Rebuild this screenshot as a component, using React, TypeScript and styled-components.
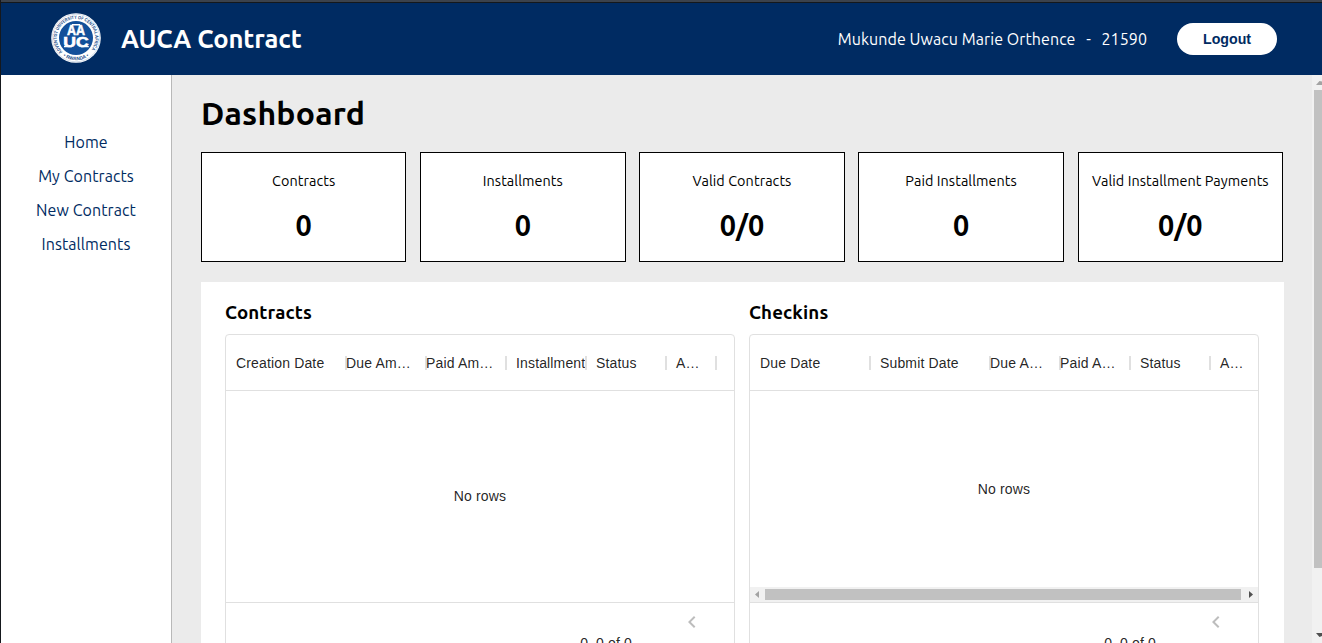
import React from "react";
import styled, { createGlobalStyle } from "styled-components";

const NAVY = "#002b62";
const LINE = "#e0e0e0";

const GlobalStyle = createGlobalStyle`
  * { box-sizing: border-box; }
  html, body { margin: 0; height: 100%; overflow: hidden; }
  body { font-family: Ubuntu, "Noto Sans", sans-serif; color: #000; background: #fff; }
  #root { height: 100%; }
`;

const Frame = styled.div`
  height: 643px;
  display: flex;
  flex-direction: column;
  overflow: hidden;
  border-left: 1px solid #15181d;
`;

const WindowEdge = styled.div`
  flex: none;
  height: 3px;
  background: #3b424c;
  border-bottom: 1px solid #14181c;
`;

const Header = styled.header`
  flex: none;
  height: 72px;
  padding: 0 45px 0 50px;
  display: flex;
  align-items: center;
  background: ${NAVY};
  color: #fff;
`;

const LogoSvg = styled.svg`
  flex: none;
  width: 50px;
  height: 50px;
  margin-top: -3px;
`;

const Label = styled.span<{ $size: number; $bold?: boolean }>`
  font-size: ${(p) => p.$size}px;
  font-weight: ${(p) => (p.$bold ? 700 : 400)};
  letter-spacing: ${(p) => (p.$bold ? 0 : 0.075)}px;
  white-space: nowrap;
`;

const Brand = styled(Label)`
  margin: -2px 0 0 20px;
  letter-spacing: -0.1px;
`;

const Account = styled.div`
  margin-left: auto;
  display: flex;
  align-items: center;
`;

const Dash = styled(Label)`
  width: 26px;
  text-align: center;
`;

const LogoutButton = styled.button`
  width: 100px;
  height: 32px;
  margin-left: 30px;
  border: 0;
  border-radius: 16px;
  background: #fff;
  color: ${NAVY};
  font: 700 14.2px "Liberation Sans", Arial, sans-serif;
`;

const Body = styled.div`
  flex: 1;
  min-height: 0;
  display: flex;
`;

const Sidebar = styled.nav`
  flex: none;
  width: 171px;
  padding-top: 50px;
  display: flex;
  flex-direction: column;
  align-items: center;
  background: #fff;
  border-right: 1px solid #b8b8b8;
`;

const NavLink = styled(Label)`
  height: 34px;
  line-height: 34px;
  color: ${NAVY};
`;

const Main = styled.main`
  flex: 1;
  min-width: 0;
  padding: 16px 28px 0 29px;
  background: #ebebeb;
  overflow: hidden;
`;

const Title = styled.h1`
  margin: 0;
  height: 44px;
  line-height: 44px;
  font-size: 32px;
  font-weight: 700;
  letter-spacing: 0.2px;
`;

const Cards = styled.section`
  margin-top: 17px;
  width: 1082px;
  display: grid;
  grid-template-columns: repeat(5, 1fr);
  column-gap: 13.8px;
`;

const Card = styled.article`
  height: 110px;
  padding-top: 18px;
  display: flex;
  flex-direction: column;
  align-items: center;
  background: #fff;
  border: 1px solid #000;
`;

const CardName = styled(Label)`
  height: 20px;
  line-height: 20px;
`;

const CardValue = styled(Label)`
  margin-top: 14px;
  height: 40px;
  line-height: 40px;
`;

const Panel = styled.section`
  width: 1083px;
  height: 480px;
  margin-top: 20px;
  padding: 18px 24px;
  display: flex;
  gap: 14px;
  background: #fff;
`;

const TableBlock = styled.div`
  flex: none;
  width: 510px;
`;

const TableTitle = styled.h2`
  margin: 0 0 9px;
  height: 25px;
  line-height: 25px;
  font-size: 18.72px;
  font-weight: 700;
  letter-spacing: 0.13px;
`;

const Grid = styled.div`
  height: 400px;
  display: flex;
  flex-direction: column;
  border: 1px solid ${LINE};
  border-radius: 4px;
  overflow: hidden;
  font: 14px "Liberation Sans", Arial, sans-serif;
  letter-spacing: 0.15px;
  color: rgba(0, 0, 0, 0.87);
`;

const GridHead = styled.div`
  flex: none;
  height: 56px;
  display: flex;
  align-items: center;
  border-bottom: 1px solid ${LINE};
`;

const HeadCell = styled.div<{ $width: number; $flush?: boolean }>`
  flex: none;
  position: relative;
  width: ${(p) => p.$width}px;
  height: 20px;
  line-height: 20px;
  padding-left: ${(p) => (p.$flush ? 0 : 10)}px;
  white-space: nowrap;
`;

const Separator = styled.i`
  position: absolute;
  right: -1px;
  top: 3px;
  width: 2px;
  height: 14px;
  background: ${LINE};
`;

const GridBody = styled.div`
  flex: none;
  height: 212px;
  display: flex;
  flex-direction: column;
  border-bottom: 1px solid ${LINE};
`;

const Empty = styled.div`
  flex: 1;
  display: flex;
  align-items: center;
  justify-content: center;
  padding-bottom: 1px;
`;

const HScroll = styled.div`
  flex: none;
  height: 15px;
  display: flex;
  align-items: center;
  padding-left: 5px;
  background: #f1f1f1;
`;

const HThumb = styled.div`
  width: 476px;
  height: 11px;
  margin: 0 8px 0 6px;
  background: #c1c1c1;
`;

const GridFoot = styled.div`
  flex: 1;
  display: flex;
  justify-content: flex-end;
  align-items: flex-start;
`;

const RowCount = styled.span`
  margin-top: 30px;
  line-height: 20px;
`;

const PrevIcon = styled.svg`
  width: 24px;
  height: 24px;
  margin: 7px 30px 0 48px;
`;

const VScroll = styled.div`
  flex: none;
  width: 10px;
  padding: 6px 0 6px 2px;
  display: flex;
  flex-direction: column;
  align-items: flex-end;
  background: #f1f1f1;
`;

const VThumb = styled.div`
  width: 8px;
  height: 478px;
  margin: 5px 0 auto;
  background: #c1c1c1;
`;

const Arrow = styled.svg`
  display: block;
  flex: none;
`;

function Logo() {
  return (
    <LogoSvg viewBox="-25 -25 50 50">
      <defs>
        <path id="ringTop" d="M-13.4 13.8A19.2 19.2 0 1 1 13.4 13.8" />
        <path id="ringBottom" d="M-14 17.2A22.2 22.2 0 0 0 14 17.2" />
      </defs>
      <circle r="24.8" fill="#fff" />
      <circle r="23.8" fill="none" stroke="#a9bdd6" strokeWidth="0.5" />
      <circle r="17" fill="#12509a" />
      <g fill="#1d4f8b" fontFamily="Liberation Sans, sans-serif" fontWeight="700" fontSize="4.8">
        <text>
          <textPath href="#ringTop" textLength="87" lengthAdjust="spacingAndGlyphs">ADVENTIST UNIVERSITY OF CENTRAL AFRICA</textPath>
        </text>
        <text textAnchor="middle">
          <textPath href="#ringBottom" startOffset="50%">• RWANDA •</textPath>
        </text>
      </g>
      <g fill="#fff" stroke="#fff" strokeWidth="0.6" fontFamily="Liberation Sans, sans-serif" fontWeight="700">
        <text x="-9" y="-3" fontSize="15" textLength="18" lengthAdjust="spacingAndGlyphs">AA</text>
        <text x="-12.8" y="9" fontSize="14.5" textLength="25.4" lengthAdjust="spacingAndGlyphs">UC</text>
      </g>
      <path d="M-12 8.6H-4M5 8.6H12.8M-4-13.2H4" stroke="#fff" strokeWidth="1.4" />
    </LogoSvg>
  );
}

type Column = { name: string; width: number; flush?: boolean; open?: boolean };

const contractColumns: Column[] = [
  { name: "Creation Date", width: 120 },
  { name: "Due Am…", width: 80, flush: true },
  { name: "Paid Am…", width: 80, flush: true },
  { name: "Installment", width: 80 },
  { name: "Status", width: 80 },
  { name: "A…", width: 50 },
];

const checkinColumns: Column[] = [
  { name: "Due Date", width: 120 },
  { name: "Submit Date", width: 120 },
  { name: "Due A…", width: 70, flush: true },
  { name: "Paid A…", width: 70, flush: true },
  { name: "Status", width: 80 },
  { name: "A…", width: 48, open: true },
];

function DataTable({ title, columns, scroll }: { title: string; columns: Column[]; scroll?: boolean }) {
  return (
    <TableBlock>
      <TableTitle>{title}</TableTitle>
      <Grid>
        <GridHead>
          {columns.map((c) => (
            <HeadCell key={c.name} $width={c.width} $flush={c.flush}>
              {c.name}
              {!c.open && <Separator />}
            </HeadCell>
          ))}
        </GridHead>
        <GridBody>
          <Empty>No rows</Empty>
          {scroll && (
            <HScroll>
              <Arrow width="4" height="7"><path d="M4 0V7L0 3.5Z" fill="#a3a3a3" /></Arrow>
              <HThumb />
              <Arrow width="4" height="7"><path d="M0 0V7L4 3.5Z" fill="#505050" /></Arrow>
            </HScroll>
          )}
        </GridBody>
        <GridFoot>
          <RowCount>0–0 of 0</RowCount>
          <PrevIcon viewBox="0 0 24 24">
            <path d="M15.41 7.41 14 6l-6 6 6 6 1.41-1.41L10.83 12z" fill="#bdbdbd" />
          </PrevIcon>
        </GridFoot>
      </Grid>
    </TableBlock>
  );
}

const navItems = ["Home", "My Contracts", "New Contract", "Installments"];

const cards = [
  { name: "Contracts", value: "0" },
  { name: "Installments", value: "0" },
  { name: "Valid Contracts", value: "0/0" },
  { name: "Paid Installments", value: "0" },
  { name: "Valid Installment Payments", value: "0/0" },
];

export default function App() {
  return (
    <Frame>
      <GlobalStyle />
      <WindowEdge />
      <Header>
        <Logo />
        <Brand $size={25.6} $bold>AUCA Contract</Brand>
        <Account>
          <Label $size={16}>Mukunde Uwacu Marie Orthence</Label>
          <Dash $size={16}>-</Dash>
          <Label $size={16}>21590</Label>
        </Account>
        <LogoutButton>Logout</LogoutButton>
      </Header>
      <Body>
        <Sidebar>
          {navItems.map((n) => (
            <NavLink key={n} $size={16}>{n}</NavLink>
          ))}
        </Sidebar>
        <Main>
          <Title>Dashboard</Title>
          <Cards>
            {cards.map((c) => (
              <Card key={c.name}>
                <CardName $size={14.4}>{c.name}</CardName>
                <CardValue $size={28.8} $bold>{c.value}</CardValue>
              </Card>
            ))}
          </Cards>
          <Panel>
            <DataTable title="Contracts" columns={contractColumns} />
            <DataTable title="Checkins" columns={checkinColumns} scroll />
          </Panel>
        </Main>
        <VScroll>
          <Arrow width="6" height="4"><path d="M0 4H6V0.5L3.5 0Z" fill="#a3a3a3" /></Arrow>
          <VThumb />
          <Arrow width="6" height="4"><path d="M0 0H6V3L3.5 4Z" fill="#505050" /></Arrow>
        </VScroll>
      </Body>
    </Frame>
  );
}
